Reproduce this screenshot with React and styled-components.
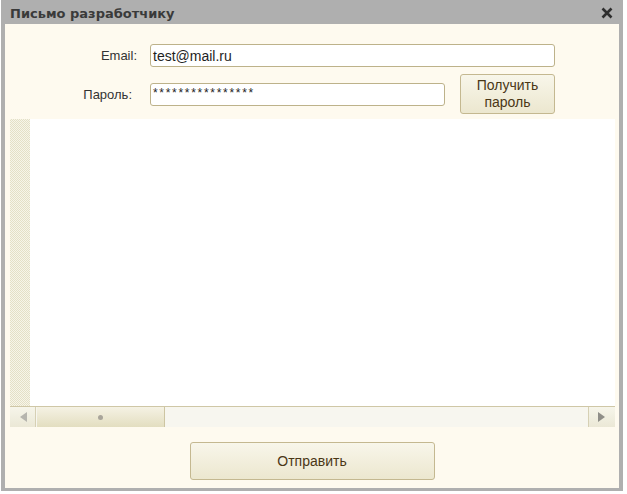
import React from 'react';
import styled, { createGlobalStyle } from 'styled-components';

const GlobalStyle = createGlobalStyle`
  html, body {
    margin: 0;
    padding: 0;
    background: #ffffff;
    font-family: "Liberation Sans", Arial, sans-serif;
  }
`;

const Page = styled.div`
  width: 627px;
  height: 494px;
  padding-left: 1px;
  box-sizing: border-box;
  background: #ffffff;
`;

const Dialog = styled.div`
  width: 622px;
  height: 491px;
  box-sizing: border-box;
  border: 4px solid #afafaf;
  border-top: none;
  border-bottom-width: 3px;
  background: #fefaef;
  display: flex;
  flex-direction: column;
`;

const TitleBar = styled.div`
  height: 24px;
  margin: 0 -4px;
  padding: 0 10px 0 9px;
  background: #afafaf;
  display: flex;
  align-items: center;
  justify-content: space-between;
  flex-shrink: 0;
`;

const Title = styled.span`
  font-family: "DejaVu Sans", sans-serif;
  font-weight: bold;
  font-size: 13px;
  color: #3a3a3a;
  padding-top: 2px;
`;

const Close = styled.svg`
  width: 12px;
  height: 12px;
  margin-top: 2px;
`;

const Form = styled.div`
  padding: 20px 0 0;
  display: grid;
  grid-template-columns: 132px 1fr;
  column-gap: 13px;
  row-gap: 7px;
  align-items: center;
`;

const Label = styled.label`
  font-size: 13px;
  color: #333333;
  text-align: right;
  padding-right: ${(p) => p.$shift || 0}px;
`;

const FieldRow = styled.div`
  display: flex;
  align-items: center;
  gap: 15px;
`;

const Input = styled.div`
  width: ${(p) => p.$w}px;
  height: 23px;
  box-sizing: border-box;
  border: 1px solid #bdb28a;
  border-radius: 3px;
  background: #ffffff;
  padding: 0 2px;
  display: flex;
  align-items: center;
  font-size: 14px;
  color: #1e1e1e;
  overflow: hidden;
  white-space: nowrap;
`;

const Stars = styled.span`
  font-size: 12px;
  letter-spacing: 1.7px;
  margin-top: -3px;
`;

const Button = styled.button`
  width: ${(p) => p.$w}px;
  height: ${(p) => p.$h}px;
  box-sizing: border-box;
  border: 1px solid #c4b890;
  border-radius: 3px;
  background: linear-gradient(#f8f6ea, #ece7cf);
  font-family: "Liberation Sans", Arial, sans-serif;
  font-size: 14px;
  line-height: 17px;
  color: #4a3716;
  padding: 0;
`;

const Editor = styled.div`
  margin: 5px 4px 0 5px;
  display: flex;
  flex-direction: column;
`;

const EditorBody = styled.div`
  height: 287px;
  display: flex;
  background: #ffffff;
`;

const Gutter = styled.div`
  width: 20px;
  background-color: #f7f5e9;
  background-image: repeating-conic-gradient(#e4e0c6 0 25%, #f7f5e9 0 50%);
  background-size: 2px 2px;
`;

const HScroll = styled.div`
  height: 20px;
  display: flex;
  border-top: 1px solid #cfc7a6;
  background: #f7f6ef;
`;

const ArrowBtn = styled.div`
  width: ${(p) => p.$w}px;
  display: flex;
  align-items: center;
  justify-content: center;
  background: linear-gradient(#f6f5ea, #ebe8d6);
  border-right: ${(p) => (p.$left ? '1px solid #d6d0b4' : 'none')};
  border-left: ${(p) => (p.$left ? 'none' : '1px solid #d6d0b4')};
`;

const Thumb = styled.div`
  width: 127px;
  margin-left: 1px;
  display: flex;
  align-items: center;
  justify-content: center;
  background: linear-gradient(#f5f2e4, #e3dec0);
  border-right: 1px solid #cdc5a2;
`;

const Grip = styled.div`
  width: 5px;
  height: 5px;
  border-radius: 50%;
  background: #a9a59a;
`;

const Track = styled.div`
  flex: 1;
`;

const Footer = styled.div`
  display: flex;
  justify-content: center;
  padding-top: 15px;
`;

const Arrow = ({ dir }) => (
  <svg width="8" height="10" viewBox="0 0 8 10">
    {dir === 'left' ? (
      <polygon points="8,0 8,10 1,5" fill="#b6b5ae" />
    ) : (
      <polygon points="0,0 0,10 7,5" fill="#8f8e88" />
    )}
  </svg>
);

export default function App() {
  return (
    <Page>
      <GlobalStyle />
      <Dialog>
        <TitleBar>
          <Title>Письмо разработчику</Title>
          <Close viewBox="0 0 12 12">
            <path d="M1.5 1.5 L10.5 10.5 M10.5 1.5 L1.5 10.5" stroke="#2e2e2e" strokeWidth="2.6" />
          </Close>
        </TitleBar>
        <Form>
          <Label>Email:</Label>
          <Input $w={405}>test@mail.ru</Input>
          <Label $shift={5}>Пароль:</Label>
          <FieldRow>
            <Input $w={295}>
              <Stars>****************</Stars>
            </Input>
            <Button $w={95} $h={40}>
              Получить
              <br />
              пароль
            </Button>
          </FieldRow>
        </Form>
        <Editor>
          <EditorBody>
            <Gutter />
          </EditorBody>
          <HScroll>
            <ArrowBtn $w={25} $left>
              <Arrow dir="left" />
            </ArrowBtn>
            <Thumb>
              <Grip />
            </Thumb>
            <Track />
            <ArrowBtn $w={26}>
              <Arrow dir="right" />
            </ArrowBtn>
          </HScroll>
        </Editor>
        <Footer>
          <Button $w={245} $h={38}>Отправить</Button>
        </Footer>
      </Dialog>
    </Page>
  );
}
